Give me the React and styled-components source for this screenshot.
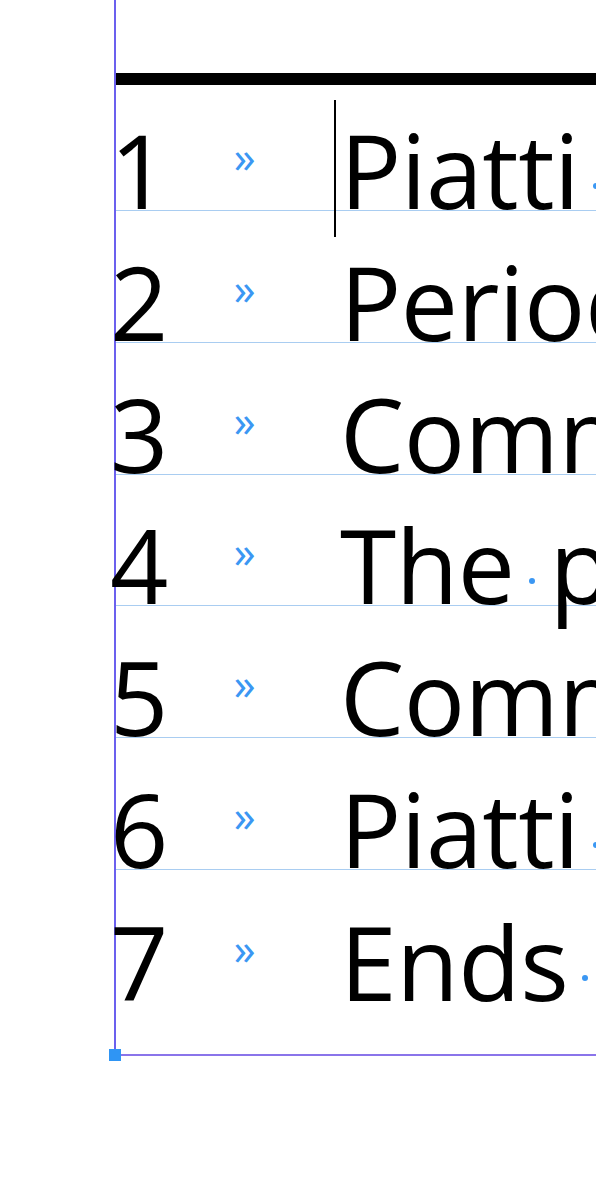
import React from "react";
import styled, { createGlobalStyle } from "styled-components";

const rows = [
  { num: "1", text: "Piatti di portata", caret: true, h: 126 },
  { num: "2", text: "Periodo di cottura", h: 132 },
  { num: "3", text: "Common dishes", h: 132 },
  { num: "4", text: "The plates served", h: 131 },
  { num: "5", text: "Common errors", h: 132 },
  { num: "6", text: "Piatti unici", h: 132 },
  { num: "7", text: "Ends here", h: 132 },
];

// render spaces as hidden-character dots, like a layout app does
const withDots = (text) => {
  const words = text.split(" ");
  return words.map((w, i) => (
    <React.Fragment key={i}>
      {w}
      {i < words.length - 1 && <Space />}
    </React.Fragment>
  ));
};

export default function App() {
  return (
    <>
      <Global />
      <Frame>
        <Rule />
        <Table>
          {rows.map((r, i) => (
            <Row key={r.num} h={r.h} last={i === rows.length - 1}>
              <NumCell>
                <Num>{r.num}</Num>
                <Mark>»</Mark>
              </NumCell>
              <TextCell>
                {r.caret && <Caret />}
                {withDots(r.text)}
              </TextCell>
            </Row>
          ))}
        </Table>
        <Handle />
      </Frame>
    </>
  );
}

const Global = createGlobalStyle`
  html {
    overflow: hidden;
  }
  body {
    margin: 0;
    padding: 0;
    min-height: 100vh;
    background: #ffffff;
    font-family: "Open Sans", "Noto Sans", sans-serif;
  }
`;

const Frame = styled.div`
  position: relative;
  margin-left: 114px;
  width: 700px;
  padding-top: 73px;
  padding-bottom: 52px;
  border-left: 2px solid #6b60ee;
  border-bottom: 2px solid #8a74ea;
`;

const Rule = styled.div`
  height: 12px;
  background: #000000;
`;

const Table = styled.div`
  display: flex;
  flex-direction: column;
`;

const Row = styled.div`
  display: flex;
  align-items: flex-end;
  box-sizing: border-box;
  height: ${({ h }) => h}px;
  border-bottom: ${({ last }) => (last ? "none" : "1px solid #a9cdf1")};
  font-size: 102px;
  letter-spacing: -0.5px;
  line-height: 80px;
  color: #000000;
  white-space: nowrap;
`;

const NumCell = styled.div`
  width: 219px;
  flex-shrink: 0;
`;

const Num = styled.span`
  margin-left: -6px;
`;

const Mark = styled.span`
  font-size: 44px;
  line-height: 0;
  color: #3b97f3;
  vertical-align: 36px;
  margin-left: 66px;
`;

const TextCell = styled.div`
  position: relative;
  padding-left: 5px;
`;

const Space = styled.span`
  display: inline-block;
  position: relative;
  width: 35px;
  height: 0;
  &::after {
    content: "";
    position: absolute;
    left: 14px;
    bottom: 20px;
    width: 6px;
    height: 6px;
    border-radius: 50%;
    background: #3b97f3;
  }
`;

const Caret = styled.span`
  position: absolute;
  left: -1px;
  bottom: -27px;
  width: 2px;
  height: 137px;
  background: #000000;
`;

const Handle = styled.div`
  position: absolute;
  left: -7px;
  bottom: -7px;
  width: 12px;
  height: 12px;
  background: #2f95f4;
`;
